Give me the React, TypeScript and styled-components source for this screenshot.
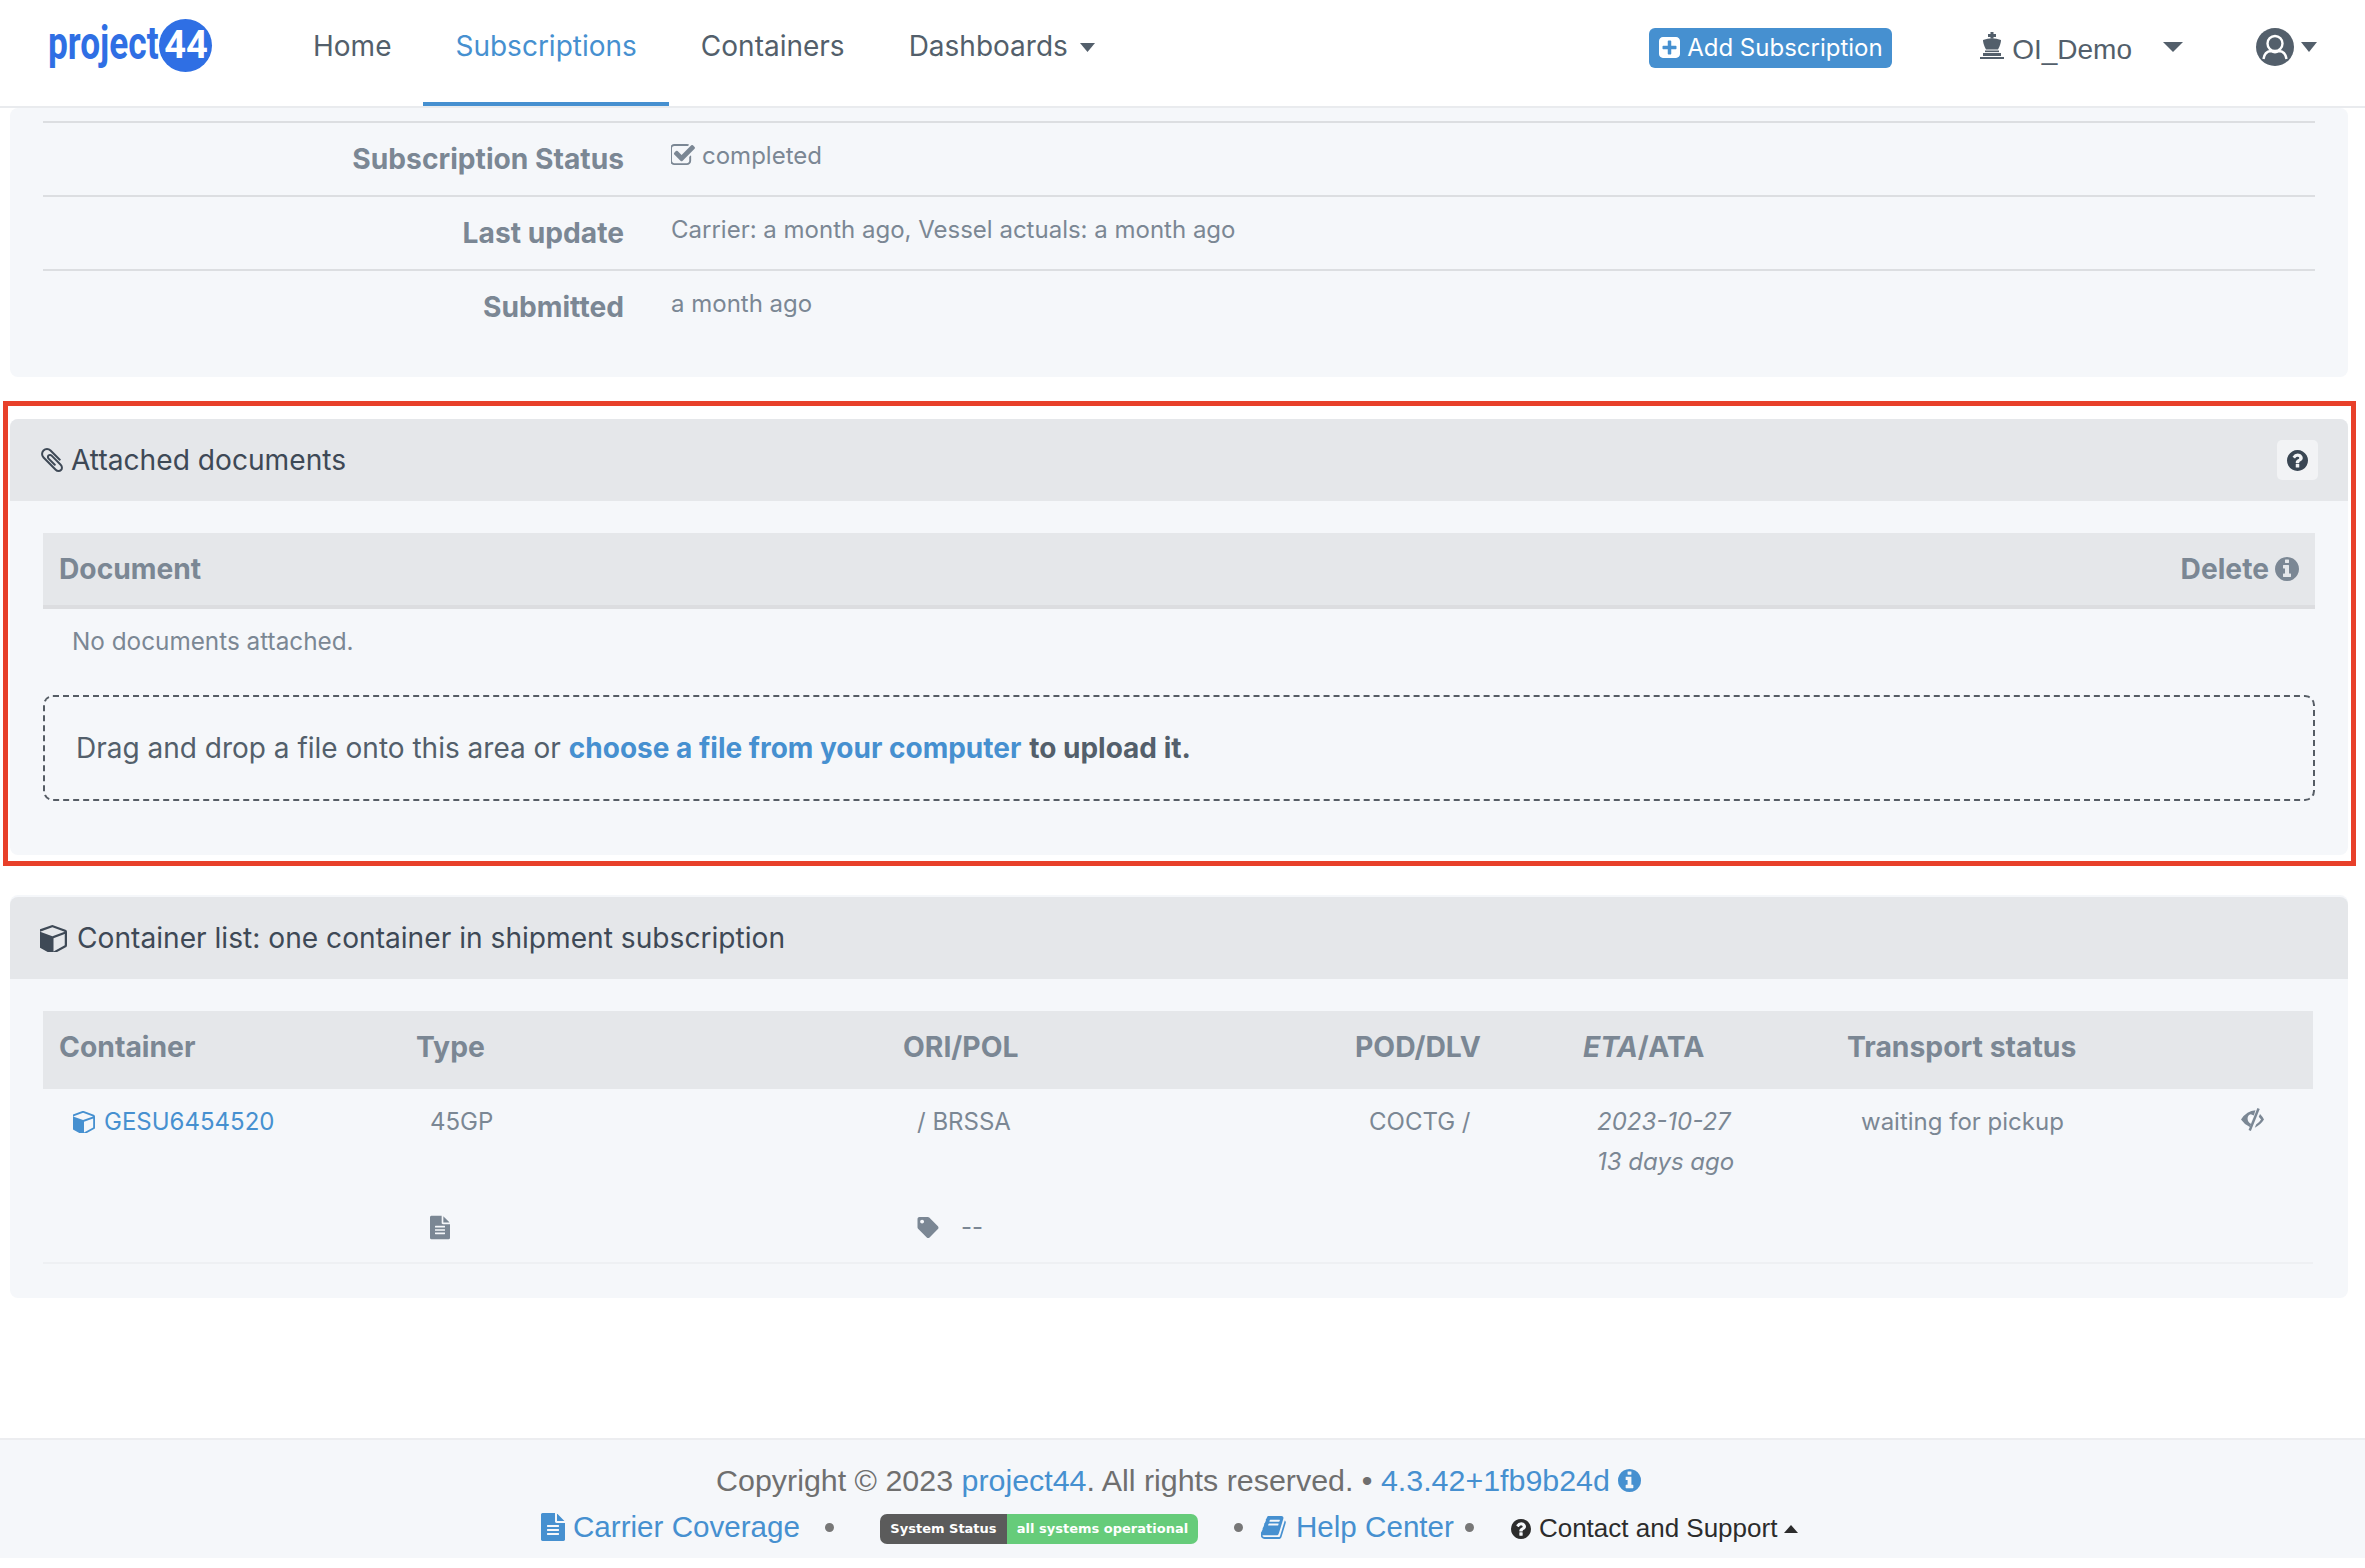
import React from 'react';
import styled, { createGlobalStyle } from 'styled-components';
import { FaTag } from 'react-icons/fa';

const BLUE = '#4690d0';
const GREY = '#7b8794';
const DARK = '#3e4956';
const SLATE = '#535f6b';
const LOGO_BLUE = '#2f6fe4';

const CIRCLE_BOX = '128 128 1536 1536';

const PATHS = {
  paperclip:
    'M1596 1385q0 117-79 196t-196 79q-135 0-235-100l-777-776q-113-115-113-271 0-159 110-270t269-111q158 0 273 113l605 606q10 10 10 22 0 16-30.5 46.5t-46.5 30.5q-13 0-23-10l-606-607q-79-77-181-77-106 0-179 75t-73 181q0 105 76 181l776 777q63 63 145 63 64 0 106-42t42-106q0-82-63-145l-581-581q-26-24-60-24-29 0-48 19t-19 48q0 32 25 59l410 410q10 10 10 22 0 16-31 47t-47 31q-12 0-22-10l-410-410q-63-61-63-149 0-82 57-139t139-57q88 0 149 63l581 581q100 98 100 235z',
  cube:
    'M896 1629l640-349v-636l-640 233v752zm-64-865l698-254-698-254-698 254zm832-252v768q0 35-18 65t-50 47l-704 384q-28 16-61 16t-61-16l-704-384q-32-17-50-47t-18-65v-768q0-40 23-73t61-47l704-256q22-8 44-8t44 8l704 256q38 14 61 47t23 73z',
  info:
    'M1152 1376v-160q0-14-9-23t-23-9h-96v-512q0-14-9-23t-23-9h-320q-14 0-23 9t-9 23v160q0 14 9 23t23 9h96v320h-96q-14 0-23 9t-9 23v160q0 14 9 23t23 9h448q14 0 23-9t9-23zm-128-896v-160q0-14-9-23t-23-9h-192q-14 0-23 9t-9 23v160q0 14 9 23t23 9h192q14 0 23-9t9-23zm640 416q0 209-103 385.5t-279.5 279.5-385.5 103-385.5-103-279.5-279.5-103-385.5 103-385.5 279.5-279.5 385.5-103 385.5 103 279.5 279.5 103 385.5z',
  question:
    'M1024 1376v-192q0-14-9-23t-23-9h-192q-14 0-23 9t-9 23v192q0 14 9 23t23 9h192q14 0 23-9t9-23zm256-672q0-88-55.5-163t-138.5-116-170-41q-243 0-371 213-15 24 8 42l132 100q7 6 19 6 16 0 25-12 53-68 86-92 34-24 86-24 48 0 85.5 26t37.5 59q0 38-20 61t-68 45q-63 28-115.5 86.5t-52.5 125.5v36q0 14 9 23t23 9h192q14 0 23-9t9-23q0-19 21.5-49.5t54.5-49.5q32-18 49-28.5t46-35 44.5-48 28-60.5 12.5-81zm384 192q0 209-103 385.5t-279.5 279.5-385.5 103-385.5-103-279.5-279.5-103-385.5 103-385.5 279.5-279.5 385.5-103 385.5 103 279.5 279.5 103 385.5z',
  book:
    'M1703 478q40 57 18 129l-275 906q-19 64-76.5 107.5t-122.5 43.5h-923q-77 0-148.5-53.5t-99.5-131.5q-24-67-2-127 0-4 3-27t4-37q1-8-3-21.5t-3-19.5q2-11 8-21t16.5-23.5 16.5-23.5q23-38 45-91.5t30-91.5q3-10 .5-30t-.5-28q3-11 17-28t17-23q21-36 42-92t25-90q1-9-2.5-32t.5-28q4-13 22-30.5t22-22.5q19-26 42.5-84.5t27.5-96.5q1-8-3-25.5t-2-26.5q2-8 9-18t18-23 17-21q8-12 16.5-30.5t15-35 16-36 19.5-32 26.5-23.5 36-11.5 47.5 5.5l-1 3q38-9 51-9h761q74 0 114 56t18 130l-274 906q-36 119-71.5 153.5t-128.5 34.5h-869q-27 0-38 15-11 16-1 43 24 70 144 70h923q29 0 56-15.5t35-41.5l300-987q7-22 5-57 38 15 59 43zm-1064 2q-4 13 2 22.5t20 9.5h608q13 0 25.5-9.5t16.5-22.5l21-64q4-13-2-22.5t-20-9.5h-608q-13 0-25.5 9.5t-16.5 22.5zm-83 256q-4 13 2 22.5t20 9.5h608q13 0 25.5-9.5t16.5-22.5l21-64q4-13-2-22.5t-20-9.5h-608q-13 0-25.5 9.5t-16.5 22.5z',
  fileText:
    'M1596 476q14 14 28 36h-472v-472q22 14 36 28zm-476 164h544v1056q0 40-28 68t-68 28h-1344q-40 0-68-28t-28-68v-1600q0-40 28-68t68-28h800v544q0 40 28 68t68 28zm160 736v-64q0-14-9-23t-23-9h-704q-14 0-23 9t-9 23v64q0 14 9 23t23 9h704q14 0 23-9t9-23zm0-256v-64q0-14-9-23t-23-9h-704q-14 0-23 9t-9 23v64q0 14 9 23t23 9h704q14 0 23-9t9-23zm0-256v-64q0-14-9-23t-23-9h-704q-14 0-23 9t-9 23v64q0 14 9 23t23 9h704q14 0 23-9t9-23z',
  checkSquare:
    'M1472 930v318q0 119-84.5 203.5t-203.5 84.5h-832q-119 0-203.5-84.5t-84.5-203.5v-832q0-119 84.5-203.5t203.5-84.5h832q63 0 117 25 15 7 18 23 3 17-9 29l-49 49q-10 10-23 10-3 0-9-2-23-6-45-6h-832q-66 0-113 47t-47 113v832q0 66 47 113t113 47h832q66 0 113-47t47-113v-254q0-13 9-22l64-64q10-10 23-10 6 0 12 3 20 8 20 29zm231-489l-814 814q-24 24-57 24t-57-24l-430-430q-24-24-24-57t24-57l110-110q24-24 57-24t57 24l263 263 647-647q24-24 57-24t57 24l110 110q24 24 24 57t-24 57z',
  plusSquare:
    'M1408 960v-128q0-26-19-45t-45-19h-320v-320q0-26-19-45t-45-19h-128q-26 0-45 19t-19 45v320h-320q-26 0-45 19t-19 45v128q0 26 19 45t45 19h320v320q0 26 19 45t45 19h128q26 0 45-19t19-45v-320h320q26 0 45-19t19-45zm256-544v960q0 119-84.5 203.5t-203.5 84.5h-960q-119 0-203.5-84.5t-84.5-203.5v-960q0-119 84.5-203.5t203.5-84.5h960q119 0 203.5 84.5t84.5 203.5z',
};

type GlyphProps = { d: string; box?: string; className?: string };

const Glyph = ({ d, box = CIRCLE_BOX, className }: GlyphProps) => (
  <svg className={className} viewBox={box} fill="currentColor">
    <path d={d} />
  </svg>
);

const GlobalStyle = createGlobalStyle`
  html, body {
    margin: 0;
    padding: 0;
    background: #fff;
  }
  body {
    font-family: Inter, "Liberation Sans", sans-serif;
    color: ${GREY};
  }
`;

const Page = styled.div`
  width: 2365px;
  height: 1568px;
  overflow: hidden;
  display: flex;
  flex-direction: column;
`;

const TopBar = styled.header`
  height: 106px;
  flex: none;
  display: flex;
  align-items: flex-start;
  padding: 0 48px 0 47px;
  background: #fff;
  border-bottom: 2px solid #e9ebee;
`;

const LogoBox = styled.a`
  width: 234px;
  flex: none;
  padding-top: 19px;
  display: flex;
  align-items: flex-start;
`;

// the wordmark is a condensed face: squeezed, with the spare width taken back
const LogoWord = styled.span`
  font-family: Roboto, sans-serif;
  font-size: 47px;
  font-weight: 700;
  line-height: 53px;
  color: ${LOGO_BLUE};
  margin: -3px -36px 0 1px;
  transform: scaleX(0.75);
  transform-origin: 0 50%;
`;

const LogoBadge = styled.span`
  width: 53px;
  height: 53px;
  border-radius: 50%;
  background: ${LOGO_BLUE};
  color: #fff;
  font-family: Roboto, sans-serif;
  font-size: 38px;
  font-weight: 700;
  line-height: 53px;
  text-align: center;
`;

const Nav = styled.nav`
  display: flex;
`;

const NavItem = styled.a<{ $active?: boolean }>`
  display: flex;
  align-items: flex-start;
  height: 102px;
  padding: 0 32px;
  font-size: 28px;
  line-height: 92px;
  color: ${(p) => (p.$active ? BLUE : SLATE)};
  border-bottom: 4px solid ${(p) => (p.$active ? BLUE : 'transparent')};
`;

const NavCaret = styled.svg`
  width: 15px;
  height: 9px;
  margin: 43px 0 0 12px;
  fill: ${SLATE};
`;

const TopRight = styled.div`
  margin-left: auto;
  display: flex;
  align-items: center;
  height: 96px;
`;

const AddButton = styled.a`
  display: flex;
  align-items: center;
  width: 243px;
  height: 40px;
  box-sizing: border-box;
  padding: 0 0 2px 10px;
  background: ${BLUE};
  border-radius: 6px;
  color: #fff;
  font-size: 24px;
  white-space: nowrap;
`;

const PlusIcon = styled(Glyph)`
  width: 21px;
  height: 21px;
  margin-right: 7px;
`;

const UserMenu = styled.div`
  display: flex;
  align-items: center;
  margin-left: 88px;
  color: ${SLATE};
`;

const KingSvg = styled.svg`
  width: 24px;
  height: 27px;
  margin-right: 8px;
  margin-top: -5px;
  fill: ${SLATE};
`;

const DemoName = styled.span`
  font-family: "Liberation Sans", Arial, sans-serif;
  font-size: 28px;
  margin-top: 3px;
`;

const HeadCaret = styled.svg<{ $w: number; $gap: number }>`
  width: ${(p) => p.$w}px;
  height: 10px;
  margin-left: ${(p) => p.$gap}px;
  fill: ${SLATE};
  margin-top: -3px;
`;

const UserSvg = styled.svg`
  width: 38px;
  height: 38px;
  margin-left: 73px;
  margin-right: 7px;
  margin-top: -3px;
`;

const Main = styled.main`
  padding: 0 17px 0 10px;
  display: flex;
  flex-direction: column;
`;

const Card = styled.section`
  background: #f5f7fa;
  border-radius: 8px;
`;

const StatusBody = styled.div`
  padding: 13px 33px 34px 33px;
`;

const StatusRow = styled.div`
  display: grid;
  grid-template-columns: 581px 1fr;
  column-gap: 47px;
  align-items: center;
  height: 72px;
  border-top: 2px solid #dcdee1;
`;

const StatusLabel = styled.div`
  text-align: right;
  font-size: 28.2px;
  font-weight: 700;
  color: ${GREY};
`;

const StatusValue = styled.div`
  display: flex;
  align-items: center;
  font-size: 24px;
  color: ${GREY};
  padding-bottom: 7px;
`;

const CheckIcon = styled(Glyph)`
  width: 24px;
  height: 23px;
  margin-right: 7px;
`;

const Highlight = styled.div`
  margin: 24px -8px 0 -7px;
  border: 5px solid #e8402a;
  padding: 11px 3px 6px 2px;
`;

const CardHead = styled.div`
  margin-top: 2px;
  height: 82px;
  display: flex;
  align-items: center;
  padding: 0 30px;
  background: #e5e7ea;
  border-radius: 8px 8px 0 0;
  color: ${DARK};
  font-size: 28.15px;
`;

const ClipIcon = styled(Glyph)`
  width: 24px;
  height: 24px;
  margin-right: 7px;
`;

const CubeIcon = styled(Glyph)`
  width: 27px;
  height: 27px;
  margin-right: 10px;
`;

const HelpButton = styled.button`
  margin-left: auto;
  width: 41px;
  height: 40px;
  padding: 0;
  display: flex;
  align-items: center;
  justify-content: center;
  border: 0;
  border-radius: 5px;
  background: #f2f3f5;
  color: #3a4653;
`;

const HelpIcon = styled(Glyph)`
  width: 21px;
  height: 21px;
`;

const DocBody = styled.div`
  padding: 32px 33px 54px 33px;
`;

const DocHead = styled.div`
  display: flex;
  justify-content: space-between;
  align-items: center;
  height: 72px;
  padding: 0 16px;
  background: #e5e7ea;
  border-bottom: 4px solid #dcdde0;
  font-size: 28.2px;
  font-weight: 700;
  color: ${GREY};
`;

const DeleteLabel = styled.span`
  display: flex;
  align-items: center;
`;

const InfoIcon = styled(Glyph)`
  width: 24px;
  height: 24px;
  margin-left: 6px;
`;

const EmptyNote = styled.div`
  padding: 12px 0 0 29px;
  height: 40px;
  line-height: 40px;
  font-size: 24.3px;
  color: ${GREY};
`;

const DropZone = styled.div`
  margin-top: 34px;
  height: 106px;
  box-sizing: border-box;
  padding-left: 31px;
  line-height: 102px;
  border: 2px dashed #555c64;
  border-radius: 10px;
  font-size: 28px;
  color: ${SLATE};
  white-space: pre;
`;

const DropLink = styled.a`
  color: ${BLUE};
  font-weight: 700;
`;

const DropStrong = styled.strong`
  font-weight: 700;
`;

const ListCard = styled(Card)`
  margin-top: 29px;
`;

const ListBody = styled.div`
  padding: 32px 35px 34px 33px;
`;

const COLUMNS = '357px 487px 452px 228px 264px 379px 1fr';

const ListHead = styled.div`
  display: grid;
  grid-template-columns: ${COLUMNS};
  align-items: center;
  height: 78px;
  box-sizing: border-box;
  padding-bottom: 6px;
  background: #e5e7ea;
  font-size: 28.3px;
  font-weight: 700;
  color: ${GREY};
`;

const HeadCell = styled.div`
  padding-left: 16px;
`;

const Emph = styled.em`
  font-style: italic;
`;

const ListRow = styled.div`
  display: grid;
  grid-template-columns: ${COLUMNS};
  padding: 13px 0 15px;
  border-bottom: 2px solid #eef0f3;
  font-size: 24px;
  line-height: 40px;
  color: ${GREY};
`;

const Cell = styled.div<{ $italic?: boolean }>`
  padding-left: 30px;
  font-style: ${(p) => (p.$italic ? 'italic' : 'normal')};
`;

const FlagCell = styled.div`
  grid-column: 2;
  margin-top: 25px;
  padding-left: 30px;
  display: flex;
  align-items: center;
`;

const TagCell = styled(FlagCell)`
  grid-column: 3;
`;

const ContainerLink = styled.a`
  display: flex;
  align-items: center;
  color: ${BLUE};
`;

const RowCube = styled(Glyph)`
  width: 22px;
  height: 22px;
  margin-right: 9px;
`;

const RowDoc = styled(Glyph)`
  width: 20px;
  height: 25px;
`;

const RowTag = styled(FaTag)`
  width: 22px;
  height: 21px;
  margin-right: 22px;
`;

const VisionSvg = styled.svg`
  display: block;
  width: 23px;
  height: 23px;
  margin: 6px 0 0 1px;
  fill: ${GREY};
`;

const Footer = styled.footer`
  margin-top: 140px;
  height: 120px;
  box-sizing: border-box;
  padding-top: 20px;
  border-top: 2px solid #ecedf0;
  background: #f5f7fa;
  font-family: "Liberation Sans", Arial, sans-serif;
`;

const FooterLine = styled.div`
  display: flex;
  align-items: center;
  justify-content: center;
  white-space: pre;
  height: 40px;
  font-size: 30.4px;
  color: #6f6f6f;
  padding-right: 8px;
`;

const FooterLinks = styled(FooterLine)`
  margin-top: 7px;
  justify-content: flex-start;
  padding-left: 541px;
  font-size: 29.6px;
  color: ${BLUE};
`;

const FooterLink = styled.a`
  color: ${BLUE};
  display: flex;
  align-items: center;
`;

const FooterInfo = styled(Glyph)`
  width: 23px;
  height: 23px;
  margin-left: 8px;
  color: ${BLUE};
`;

const FooterDoc = styled(Glyph)`
  width: 24px;
  height: 30px;
  margin-right: 8px;
`;

const FooterBook = styled(Glyph)`
  width: 25px;
  height: 25px;
  margin-right: 10px;
`;

const Dot = styled.span<{ $left: number; $right: number }>`
  width: 9px;
  height: 9px;
  border-radius: 50%;
  background: #777;
  margin: 0 ${(p) => p.$right}px 0 ${(p) => p.$left}px;
`;

const Badge = styled.div`
  display: flex;
  height: 30px;
  border-radius: 7px;
  overflow: hidden;
  font-family: "DejaVu Sans", Verdana, sans-serif;
  font-size: 13px;
  font-weight: 700;
  color: #fff;
  line-height: 30px;
  margin-top: 3px;
`;

const BadgePart = styled.span<{ $bg: string; $w: number }>`
  background: ${(p) => p.$bg};
  width: ${(p) => p.$w}px;
  text-align: center;
`;

const Support = styled.a`
  display: flex;
  align-items: center;
  font-size: 26px;
  color: #2c2c2c;
  margin-top: 3px;
`;

const SupportHelp = styled(Glyph)`
  width: 20px;
  height: 20px;
  margin-right: 8px;
`;

const SupportCaret = styled.svg`
  width: 14px;
  height: 8px;
  margin-left: 7px;
  fill: #2c2c2c;
`;

const TriangleDown = ({ w, gap }: { w: number; gap: number }) => (
  <HeadCaret $w={w} $gap={gap} viewBox="0 0 20 10" preserveAspectRatio="none">
    <path d="M0 0h20L10 10z" />
  </HeadCaret>
);

const KingIcon = () => (
  <KingSvg viewBox="0 0 24 27">
    <path d="M10.5 0h3v2h2.5v3h-2.5v1.5h-3V5H8V2h2.5z" />
    <path d="M3 8q9-3.5 18 0q0 4-3 9.5H6Q3 12 3 8z" />
    <rect x="5" y="18.5" width="14" height="1.6" />
    <rect x="3" y="21" width="18" height="3" />
    <rect x="0" y="25" width="24" height="2" />
  </KingSvg>
);

const UserIcon = () => (
  <UserSvg viewBox="0 0 38 38">
    <circle cx="19" cy="19" r="19" fill={SLATE} />
    <circle cx="19" cy="15.5" r="7.5" fill={SLATE} stroke="#fff" strokeWidth="2.4" />
    <path
      d="M7.5 31q1-7.5 7.5-8q4 2.5 8 0q6.5 .5 7.5 8"
      fill={SLATE}
      stroke="#fff"
      strokeWidth="2.4"
    />
  </UserSvg>
);

const VisionIcon = () => (
  <VisionSvg viewBox="0 0 70 70">
    <path d="M44 7Q18 8 0 35q10 15 27 23l4-9q-11-6-11-17q0-11 10-13l9 4z" />
    <path d="M36 26l-6 18q-4-4-3-10q1-6 9-8z" fill="#fff" />
    <path d="M50 0l7 3L30 70l-7-3z" />
    <path d="M58 18q7 7 12 17Q60 51 42 60l4-10q10-6 15-15q-4-5-7-8z" />
  </VisionSvg>
);

const statusRows = [
  { label: 'Last update', value: 'Carrier: a month ago, Vessel actuals: a month ago' },
  { label: 'Submitted', value: 'a month ago' },
];

export default function App() {
  return (
    <Page>
      <GlobalStyle />
      <TopBar>
        <LogoBox>
          <LogoWord>project</LogoWord>
          <LogoBadge>44</LogoBadge>
        </LogoBox>
        <Nav>
          <NavItem>Home</NavItem>
          <NavItem $active>Subscriptions</NavItem>
          <NavItem>Containers</NavItem>
          <NavItem>
            Dashboards
            <NavCaret viewBox="0 0 20 10" preserveAspectRatio="none">
              <path d="M0 0h20L10 10z" />
            </NavCaret>
          </NavItem>
        </Nav>
        <TopRight>
          <AddButton>
            <PlusIcon d={PATHS.plusSquare} />
            Add Subscription
          </AddButton>
          <UserMenu>
            <KingIcon />
            <DemoName>OI_Demo</DemoName>
            <TriangleDown w={20} gap={31} />
            <UserIcon />
            <TriangleDown w={16} gap={0} />
          </UserMenu>
        </TopRight>
      </TopBar>
      <Main>
        <Card>
          <StatusBody>
            <StatusRow>
              <StatusLabel>Subscription Status</StatusLabel>
              <StatusValue>
                <CheckIcon d={PATHS.checkSquare} box="128 128 1600 1536" />
                completed
              </StatusValue>
            </StatusRow>
            {statusRows.map((row) => (
              <StatusRow key={row.label}>
                <StatusLabel>{row.label}</StatusLabel>
                <StatusValue>{row.value}</StatusValue>
              </StatusRow>
            ))}
          </StatusBody>
        </Card>
        <Highlight>
          <Card>
            <CardHead>
              <ClipIcon d={PATHS.paperclip} />
              Attached documents
              <HelpButton>
                <HelpIcon d={PATHS.question} />
              </HelpButton>
            </CardHead>
            <DocBody>
              <DocHead>
                Document
                <DeleteLabel>
                  Delete
                  <InfoIcon d={PATHS.info} />
                </DeleteLabel>
              </DocHead>
              <EmptyNote>No documents attached.</EmptyNote>
              <DropZone>
                Drag and drop a file onto this area or{' '}
                <DropLink>choose a file from your computer</DropLink>{' '}
                <DropStrong>to upload it.</DropStrong>
              </DropZone>
            </DocBody>
          </Card>
        </Highlight>
        <ListCard>
          <CardHead>
            <CubeIcon d={PATHS.cube} />
            Container list: one container in shipment subscription
          </CardHead>
          <ListBody>
            <ListHead>
              <HeadCell>Container</HeadCell>
              <HeadCell>Type</HeadCell>
              <HeadCell>ORI/POL</HeadCell>
              <HeadCell>POD/DLV</HeadCell>
              <HeadCell>
                <Emph>ETA</Emph>/ATA
              </HeadCell>
              <HeadCell>Transport status</HeadCell>
              <HeadCell />
            </ListHead>
            <ListRow>
              <Cell>
                <ContainerLink>
                  <RowCube d={PATHS.cube} />
                  GESU6454520
                </ContainerLink>
              </Cell>
              <Cell>45GP</Cell>
              <Cell>/ BRSSA</Cell>
              <Cell>COCTG /</Cell>
              <Cell $italic>
                2023-10-27
                <br />
                13 days ago
              </Cell>
              <Cell>waiting for pickup</Cell>
              <Cell>
                <VisionIcon />
              </Cell>
              <FlagCell>
                <RowDoc d={PATHS.fileText} box="128 0 1536 1792" />
              </FlagCell>
              <TagCell>
                <RowTag />
                --
              </TagCell>
            </ListRow>
          </ListBody>
        </ListCard>
      </Main>
      <Footer>
        <FooterLine>
          {'Copyright © 2023 '}
          <FooterLink>project44</FooterLink>
          {'. All rights reserved. • '}
          <FooterLink>4.3.42+1fb9b24d</FooterLink>
          <FooterInfo d={PATHS.info} />
        </FooterLine>
        <FooterLinks>
          <FooterLink>
            <FooterDoc d={PATHS.fileText} box="128 0 1536 1792" />
            Carrier Coverage
          </FooterLink>
          <Dot $left={25} $right={46} />
          <Badge>
            <BadgePart $bg="#5b5b5b" $w={127}>
              System Status
            </BadgePart>
            <BadgePart $bg="#66cc7a" $w={191}>
              all systems operational
            </BadgePart>
          </Badge>
          <Dot $left={36} $right={18} />
          <FooterLink>
            <FooterBook d={PATHS.book} box="80 128 1660 1540" />
            Help Center
          </FooterLink>
          <Dot $left={11} $right={37} />
          <Support>
            <SupportHelp d={PATHS.question} />
            Contact and Support
            <SupportCaret viewBox="0 0 20 10" preserveAspectRatio="none">
              <path d="M0 10h20L10 0z" />
            </SupportCaret>
          </Support>
        </FooterLinks>
      </Footer>
    </Page>
  );
}
